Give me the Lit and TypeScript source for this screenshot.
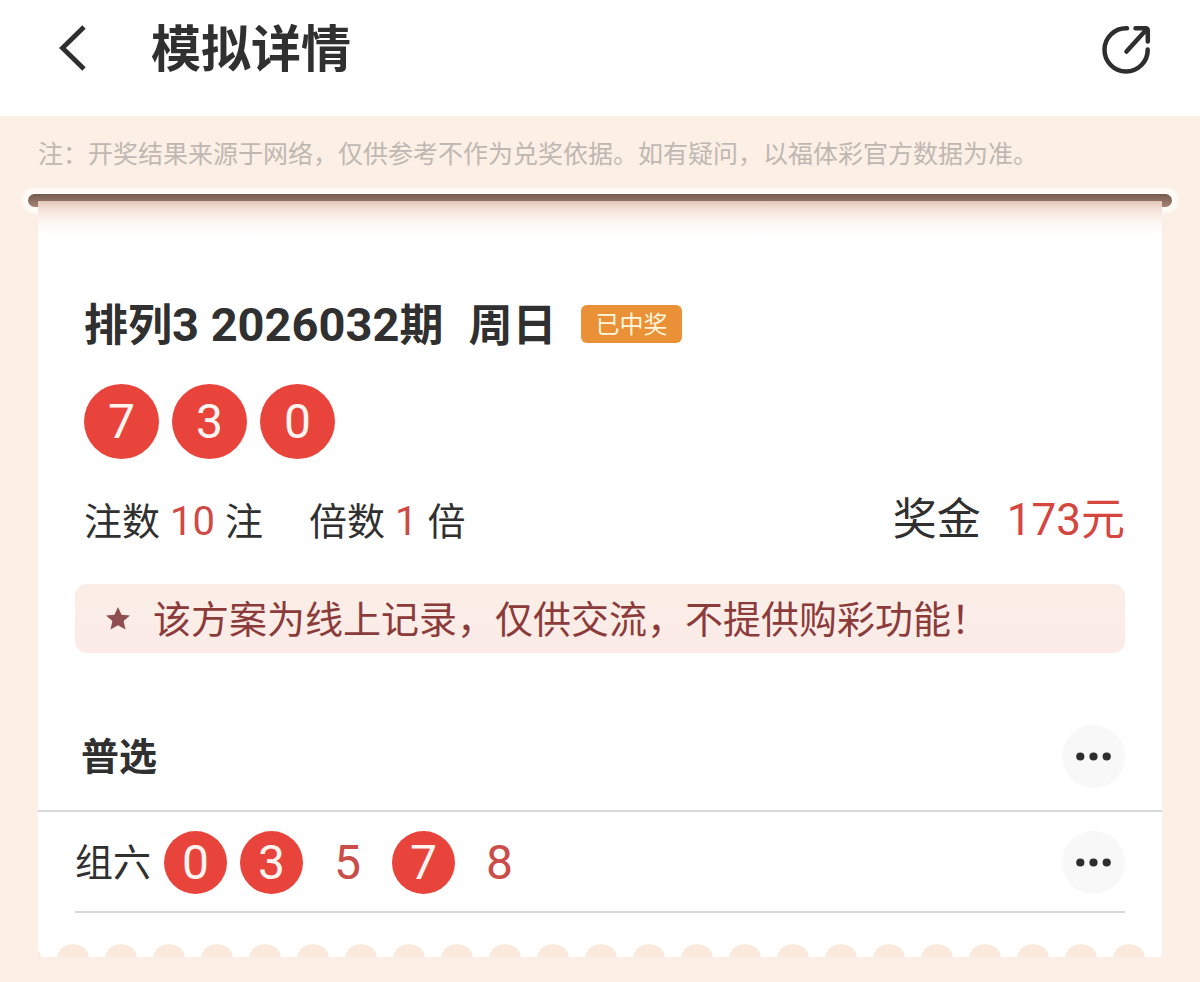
import { LitElement, html, css } from "lit";
import { customElement, property } from "lit/decorators.js";
import { classMap } from "lit/directives/class-map.js";

interface Pick {
  digit: number;
  hit: boolean;
}

const DRAW = [7, 3, 0];

const PICKS: Pick[] = [
  { digit: 0, hit: true },
  { digit: 3, hit: true },
  { digit: 5, hit: false },
  { digit: 7, hit: true },
  { digit: 8, hit: false },
];

@customElement("number-ball")
export class NumberBall extends LitElement {
  @property({ type: Number }) value = 0;
  @property({ type: Boolean }) plain = false;
  @property({ type: Boolean }) large = false;

  static styles = css`
    :host {
      display: block;
    }
    .ball {
      display: flex;
      align-items: center;
      justify-content: center;
      width: 63px;
      height: 63px;
      border-radius: 50%;
      background: #e9443c;
      color: #fff4f0;
      font-size: 48px;
      line-height: 48px;
    }
    .large {
      width: 75px;
      height: 75px;
    }
    .plain {
      background: none;
      color: #cb4d47;
    }
  `;

  render() {
    const classes = { ball: true, large: this.large, plain: this.plain };
    return html`<span class=${classMap(classes)}>${this.value}</span>`;
  }
}

@customElement("more-button")
export class MoreButton extends LitElement {
  @property() label = "更多";

  static styles = css`
    :host {
      display: block;
    }
    .more {
      display: flex;
      align-items: center;
      justify-content: center;
      width: 63px;
      height: 63px;
      padding: 0;
      border: 0;
      border-radius: 50%;
      background: #f8f8f8;
      cursor: pointer;
    }
  `;

  render() {
    return html`
      <button class="more" type="button" aria-label=${this.label}>
        <svg width="35" height="9" viewBox="0 0 35 9" fill="#2e2e2e" aria-hidden="true">
          <circle cx="4.3" cy="4.5" r="4.1" />
          <circle cx="17.5" cy="4.5" r="4.1" />
          <circle cx="30.7" cy="4.5" r="4.1" />
        </svg>
      </button>
    `;
  }
}

@customElement("app-root")
export class AppRoot extends LitElement {
  static styles = css`
    :host {
      display: block;
      min-height: 100vh;
      background: #fcefe5;
      color: #303030;
      font-family: Roboto, "Noto Sans CJK SC", sans-serif;
    }
    h1,
    h2,
    h3,
    p {
      margin: 0;
    }
    .header {
      display: flex;
      align-items: center;
      height: 96px;
      padding: 0 48px 20px;
      background: #fff;
    }
    .icon-button {
      display: flex;
      align-items: center;
      justify-content: center;
      width: 52px;
      height: 52px;
      padding: 0;
      border: 0;
      background: none;
      color: #2e2e2e;
      cursor: pointer;
    }
    .title {
      flex: 1;
      margin-left: 51px;
      padding-top: 4px;
      font-size: 50px;
      line-height: 60px;
      font-weight: 700;
    }
    .note {
      padding: 22px 38px 0;
      font-size: 25px;
      line-height: 34px;
      color: #bfb8b2;
    }
    .slot {
      height: 13px;
      margin: 22px 28px 0;
      border-radius: 7px;
      background: linear-gradient(#735b50, #a88374);
      box-shadow: 0 0 3px 6px #fffcf8;
    }
    .ticket {
      position: relative;
      margin: -6px 38px 0;
      background: linear-gradient(#e2c6b8, #f5e4da 9px, #fdf6f2 21px, #fffefd 32px, #fff 40px);
    }
    .summary {
      padding: 92px 37px 0;
    }
    .draw {
      display: flex;
      align-items: center;
      padding: 0 9px;
    }
    .draw-name {
      padding-top: 4px;
      font-size: 44px;
      line-height: 56px;
      font-weight: 700;
    }
    .draw-no {
      font-size: 47px;
    }
    .weekday {
      margin-left: 25px;
    }
    .badge {
      margin-left: 25px;
      padding: 2px 15px 0 14px;
      border-radius: 6px;
      background: #ea9036;
      color: #fff6dc;
      font-size: 24px;
      line-height: 36px;
    }
    .balls {
      display: flex;
      gap: 13px;
    }
    .result {
      padding: 30px 9px 0;
    }
    .stats {
      display: flex;
      align-items: center;
      padding: 31px 0 0 9px;
      font-size: 38px;
      line-height: 64px;
    }
    .stat {
      display: flex;
      align-items: baseline;
      gap: 10px;
      margin-right: 46px;
    }
    .value {
      color: #cf4a44;
      font-size: 40px;
    }
    .prize {
      display: flex;
      align-items: baseline;
      gap: 26px;
      margin-left: auto;
      padding-bottom: 4px;
      font-size: 44px;
      line-height: 60px;
    }
    .amount {
      color: #d5463f;
    }
    .notice {
      display: flex;
      align-items: center;
      gap: 22px;
      margin-top: 30px;
      padding: 0 30px;
      border-radius: 12px;
      background: linear-gradient(#faeee6, #fcebe8);
      color: #8c3b3b;
      font-size: 38px;
    }
    .notice-text {
      padding-top: 3px;
      line-height: 66px;
    }
    .mode {
      display: flex;
      align-items: center;
      justify-content: space-between;
      margin-top: 72px;
      padding: 0 37px 22px 43px;
      border-bottom: 2px solid #d8d8d8;
    }
    .mode-name {
      font-size: 38px;
      line-height: 56px;
      font-weight: 700;
    }
    .bet {
      display: flex;
      align-items: center;
      margin: 0 37px;
      padding: 19px 0 17px;
      border-bottom: 2px solid #d8d8d8;
    }
    .bet-name {
      margin-right: 13px;
      font-size: 38px;
      line-height: 56px;
    }
    .bet-more {
      margin-left: auto;
    }
    .perforation {
      height: 13px;
      margin-top: 31px;
      background: radial-gradient(ellipse 16px 13px at 50% 100%, #fbeadb 96%, transparent) 11px 0 / 48px 13px repeat-x;
    }
  `;

  render() {
    return html`
      <header class="header">
        <button class="icon-button" type="button" aria-label="返回">
          <svg width="52" height="52" viewBox="0 0 52 52" fill="none" stroke="currentColor" stroke-width="4.8" aria-hidden="true">
            <path d="M36 5 14.5 26 36 47" />
          </svg>
        </button>
        <h1 class="title">模拟详情</h1>
        <button class="icon-button" type="button" aria-label="分享">
          <svg width="52" height="52" viewBox="0 0 52 52" fill="none" stroke="currentColor" stroke-width="4.5" stroke-linecap="round" stroke-linejoin="round" aria-hidden="true">
            <path d="M27 6.3A21.6 21.6 0 1 0 47.7 27.5" />
            <path d="M35.5 6.2H45.5Q47.8 6.2 47.8 8.5V19.5M46.5 7.5 26.5 29.5" />
          </svg>
        </button>
      </header>
      <main>
        <p class="note">注：开奖结果来源于网络，仅供参考不作为兑奖依据。如有疑问，以福体彩官方数据为准。</p>
        <div class="slot"></div>
        <article class="ticket">
          <section class="summary">
            <div class="draw">
              <h2 class="draw-name">排列<span class="draw-no">3 2026032</span>期<span class="weekday">周日</span></h2>
              <span class="badge">已中奖</span>
            </div>
            <div class="balls result">
              ${DRAW.map((n) => html`<number-ball large .value=${n}></number-ball>`)}
            </div>
            <div class="stats">
              <span class="stat"><span>注数</span><span class="value">10</span><span>注</span></span>
              <span class="stat"><span>倍数</span><span class="value">1</span><span>倍</span></span>
              <span class="prize"><span>奖金</span><span class="amount">173元</span></span>
            </div>
            <p class="notice">
              <svg width="26" height="26" viewBox="0 0 26 26" fill="#8f4f51" aria-hidden="true">
                <path d="M13 1 16.5 8.7 25 9.5 18.6 15.1 20.5 23.5 13 19.2 5.5 23.5 7.4 15.1 1 9.5 9.5 8.7Z" />
              </svg>
              <span class="notice-text">该方案为线上记录，仅供交流，不提供购彩功能！</span>
            </p>
          </section>
          <section>
            <div class="mode">
              <h3 class="mode-name">普选</h3>
              <more-button label="普选更多"></more-button>
            </div>
            <div class="bet">
              <span class="bet-name">组六</span>
              <div class="balls">
                ${PICKS.map((p) => html`<number-ball .value=${p.digit} .plain=${!p.hit}></number-ball>`)}
              </div>
              <more-button class="bet-more" label="组六更多"></more-button>
            </div>
          </section>
          <div class="perforation"></div>
        </article>
      </main>
    `;
  }
}
